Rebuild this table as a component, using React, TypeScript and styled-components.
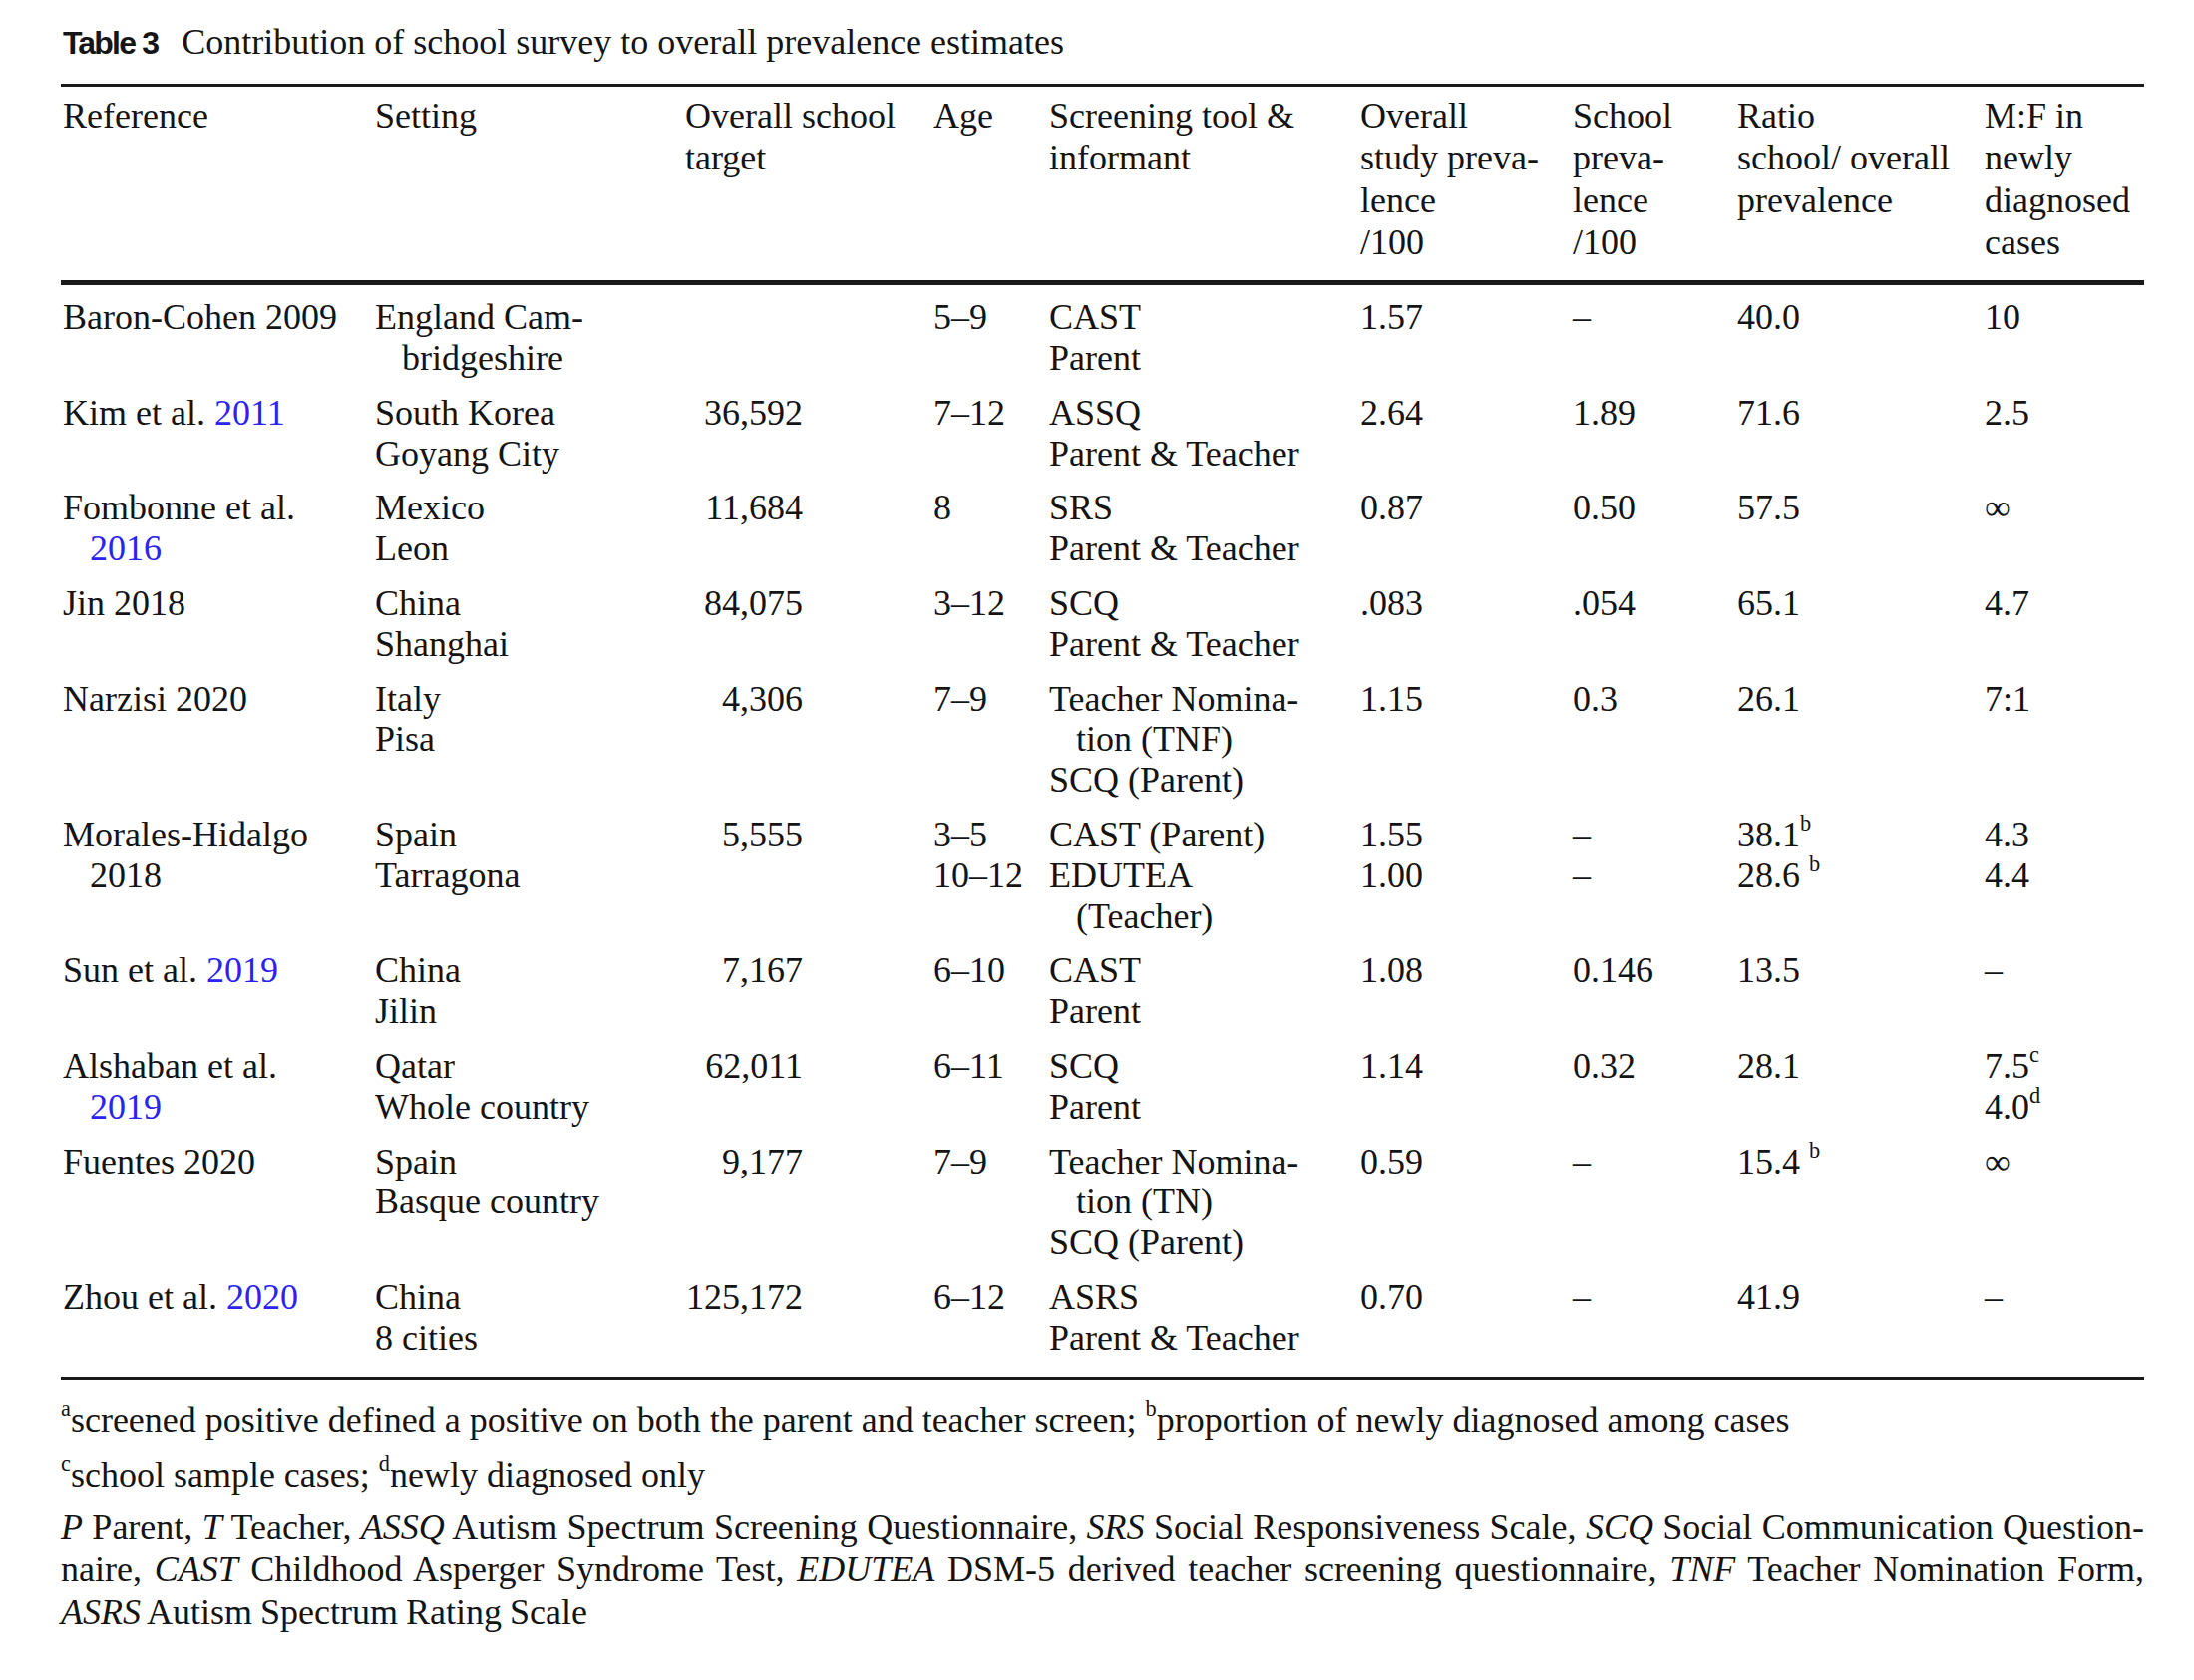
import React from "react";
import styled, { createGlobalStyle } from "styled-components";

const GlobalStyle = createGlobalStyle`
  html, body { margin: 0; padding: 0; background: #ffffff; }
  body {
    color: #141414;
    font-family: "Liberation Serif", "Times New Roman", serif;
    -webkit-font-smoothing: antialiased;
  }
`;

const COLS = "315px 311px 249px 116px 312px 213px 165px 248px 160px";

const Page = styled.div`
  width: 2089px;
  padding: 22px 0 40px 61px;
`;

const Caption = styled.div`
  display: flex;
  align-items: baseline;
  gap: 24px;
  padding-left: 2px;
  font-size: 36px;
  line-height: 41px;
  white-space: nowrap;
`;

const CaptionLabel = styled.span`
  font-family: "Liberation Sans", Arial, sans-serif;
  font-weight: 700;
  font-size: 32px;
  letter-spacing: -1.8px;
  color: #151515;
`;

const Rule = styled.div<{ $weight: number; $top?: number }>`
  height: ${(p) => p.$weight}px;
  background: #1a1a1a;
  margin-top: ${(p) => p.$top ?? 0}px;
`;

const HeaderRow = styled.div`
  display: grid;
  grid-template-columns: ${COLS};
  padding: 8px 0 17px;
  font-size: 36px;
  line-height: 42.3px;
`;

const Body = styled.div`
  padding: 5px 0 11px;
`;

const Row = styled.div`
  display: grid;
  grid-template-columns: ${COLS};
  padding: 7px 0;
  font-size: 36px;
  line-height: 40.8px;
`;

const Cell = styled.div<{ $right?: boolean; $first?: boolean }>`
  display: flex;
  flex-direction: column;
  white-space: nowrap;
  padding-left: ${(p) => (p.$first ? 2 : 0)}px;
  ${(p) => (p.$right ? "width: 118px; align-items: flex-end;" : "")}
`;

const Line = styled.span<{ $indent?: boolean }>`
  display: block;
  padding-left: ${(p) => (p.$indent ? 27 : 0)}px;
`;

const Year = styled.span`
  color: #2b23f2;
`;

const Sup = styled.sup`
  font-size: 0.62em;
  line-height: 0;
  vertical-align: 0.72em;
`;

const Notes = styled.div`
  margin-top: 19px;
  font-size: 36px;
  line-height: 42.5px;
`;

const Note = styled.p<{ $gap: number }>`
  margin: ${(p) => p.$gap}px 0 0;
`;

const JustLine = styled.span<{ $justify?: boolean }>`
  display: block;
  text-align: ${(p) => (p.$justify ? "justify" : "left")};
  text-align-last: ${(p) => (p.$justify ? "justify" : "left")};
  word-spacing: -1px;
`;

const Abbr = styled.i`
  font-style: italic;
`;

type L = { t: React.ReactNode; indent?: boolean };
type RowData = {
  ref: L[];
  setting: L[];
  target: string;
  age: L[];
  tool: L[];
  overall: L[];
  school: L[];
  ratio: L[];
  mf: L[];
};

const l = (t: React.ReactNode, indent = false): L => ({ t, indent });

const headers: string[][] = [
  ["Reference"],
  ["Setting"],
  ["Overall school", "target"],
  ["Age"],
  ["Screening tool &", "informant"],
  ["Overall", "study preva-", "lence", "/100"],
  ["School", "preva-", "lence", "/100"],
  ["Ratio", "school/ overall", "prevalence"],
  ["M:F in", "newly", "diagnosed", "cases"],
];

const rows: RowData[] = [
  {
    ref: [l("Baron-Cohen 2009")],
    setting: [l("England Cam-"), l("bridgeshire", true)],
    target: "",
    age: [l("5–9")],
    tool: [l("CAST"), l("Parent")],
    overall: [l("1.57")],
    school: [l("–")],
    ratio: [l("40.0")],
    mf: [l("10")],
  },
  {
    ref: [l(<>Kim et al. <Year>2011</Year></>)],
    setting: [l("South Korea"), l("Goyang City")],
    target: "36,592",
    age: [l("7–12")],
    tool: [l("ASSQ"), l("Parent & Teacher")],
    overall: [l("2.64")],
    school: [l("1.89")],
    ratio: [l("71.6")],
    mf: [l("2.5")],
  },
  {
    ref: [l("Fombonne et al."), l(<Year>2016</Year>, true)],
    setting: [l("Mexico"), l("Leon")],
    target: "11,684",
    age: [l("8")],
    tool: [l("SRS"), l("Parent & Teacher")],
    overall: [l("0.87")],
    school: [l("0.50")],
    ratio: [l("57.5")],
    mf: [l("∞")],
  },
  {
    ref: [l("Jin 2018")],
    setting: [l("China"), l("Shanghai")],
    target: "84,075",
    age: [l("3–12")],
    tool: [l("SCQ"), l("Parent & Teacher")],
    overall: [l(".083")],
    school: [l(".054")],
    ratio: [l("65.1")],
    mf: [l("4.7")],
  },
  {
    ref: [l("Narzisi 2020")],
    setting: [l("Italy"), l("Pisa")],
    target: "4,306",
    age: [l("7–9")],
    tool: [l("Teacher Nomina-"), l("tion (TNF)", true), l("SCQ (Parent)")],
    overall: [l("1.15")],
    school: [l("0.3")],
    ratio: [l("26.1")],
    mf: [l("7:1")],
  },
  {
    ref: [l("Morales-Hidalgo"), l("2018", true)],
    setting: [l("Spain"), l("Tarragona")],
    target: "5,555",
    age: [l("3–5"), l("10–12")],
    tool: [l("CAST (Parent)"), l("EDUTEA"), l("(Teacher)", true)],
    overall: [l("1.55"), l("1.00")],
    school: [l("–"), l("–")],
    ratio: [l(<>38.1<Sup>b</Sup></>), l(<>28.6 <Sup>b</Sup></>)],
    mf: [l("4.3"), l("4.4")],
  },
  {
    ref: [l(<>Sun et al. <Year>2019</Year></>)],
    setting: [l("China"), l("Jilin")],
    target: "7,167",
    age: [l("6–10")],
    tool: [l("CAST"), l("Parent")],
    overall: [l("1.08")],
    school: [l("0.146")],
    ratio: [l("13.5")],
    mf: [l("–")],
  },
  {
    ref: [l("Alshaban et al."), l(<Year>2019</Year>, true)],
    setting: [l("Qatar"), l("Whole country")],
    target: "62,011",
    age: [l("6–11")],
    tool: [l("SCQ"), l("Parent")],
    overall: [l("1.14")],
    school: [l("0.32")],
    ratio: [l("28.1")],
    mf: [l(<>7.5<Sup>c</Sup></>), l(<>4.0<Sup>d</Sup></>)],
  },
  {
    ref: [l("Fuentes 2020")],
    setting: [l("Spain"), l("Basque country")],
    target: "9,177",
    age: [l("7–9")],
    tool: [l("Teacher Nomina-"), l("tion (TN)", true), l("SCQ (Parent)")],
    overall: [l("0.59")],
    school: [l("–")],
    ratio: [l(<>15.4 <Sup>b</Sup></>)],
    mf: [l("∞")],
  },
  {
    ref: [l(<>Zhou et al. <Year>2020</Year></>)],
    setting: [l("China"), l("8 cities")],
    target: "125,172",
    age: [l("6–12")],
    tool: [l("ASRS"), l("Parent & Teacher")],
    overall: [l("0.70")],
    school: [l("–")],
    ratio: [l("41.9")],
    mf: [l("–")],
  },
];

const Lines = ({ lines }: { lines: L[] }) => (
  <>
    {lines.map((x, i) => (
      <Line key={i} $indent={x.indent}>
        {x.t}
      </Line>
    ))}
  </>
);

export default function App() {
  return (
    <>
      <GlobalStyle />
      <Page>
        <Caption>
          <CaptionLabel>Table 3</CaptionLabel>
          <span>Contribution of school survey to overall prevalence estimates</span>
        </Caption>
        <Rule $weight={3} $top={20} />
        <HeaderRow>
          {headers.map((h, i) => (
            <Cell key={i} $first={i === 0}>
              {h.map((t, j) => (
                <Line key={j}>{t}</Line>
              ))}
            </Cell>
          ))}
        </HeaderRow>
        <Rule $weight={5} />
        <Body>
          {rows.map((r, i) => (
            <Row key={i}>
              <Cell $first>
                <Lines lines={r.ref} />
              </Cell>
              <Cell>
                <Lines lines={r.setting} />
              </Cell>
              <Cell $right>
                <Line>{r.target}</Line>
              </Cell>
              <Cell>
                <Lines lines={r.age} />
              </Cell>
              <Cell>
                <Lines lines={r.tool} />
              </Cell>
              <Cell>
                <Lines lines={r.overall} />
              </Cell>
              <Cell>
                <Lines lines={r.school} />
              </Cell>
              <Cell>
                <Lines lines={r.ratio} />
              </Cell>
              <Cell>
                <Lines lines={r.mf} />
              </Cell>
            </Row>
          ))}
        </Body>
        <Rule $weight={3} />
        <Notes>
          <Note $gap={0}>
            <Sup>a</Sup>screened positive defined a positive on both the parent and teacher screen; <Sup>b</Sup>proportion of newly diagnosed among cases
          </Note>
          <Note $gap={13}>
            <Sup>c</Sup>school sample cases; <Sup>d</Sup>newly diagnosed only
          </Note>
          <Note $gap={10}>
            <JustLine $justify>
              <Abbr>P</Abbr> Parent, <Abbr>T</Abbr> Teacher, <Abbr>ASSQ</Abbr> Autism Spectrum Screening Questionnaire, <Abbr>SRS</Abbr> Social Responsiveness Scale, <Abbr>SCQ</Abbr> Social Communication Question-
            </JustLine>
            <JustLine $justify>
              naire, <Abbr>CAST</Abbr> Childhood Asperger Syndrome Test, <Abbr>EDUTEA</Abbr> DSM-5 derived teacher screening questionnaire, <Abbr>TNF</Abbr> Teacher Nomination Form,
            </JustLine>
            <JustLine>
              <Abbr>ASRS</Abbr> Autism Spectrum Rating Scale
            </JustLine>
          </Note>
        </Notes>
      </Page>
    </>
  );
}
